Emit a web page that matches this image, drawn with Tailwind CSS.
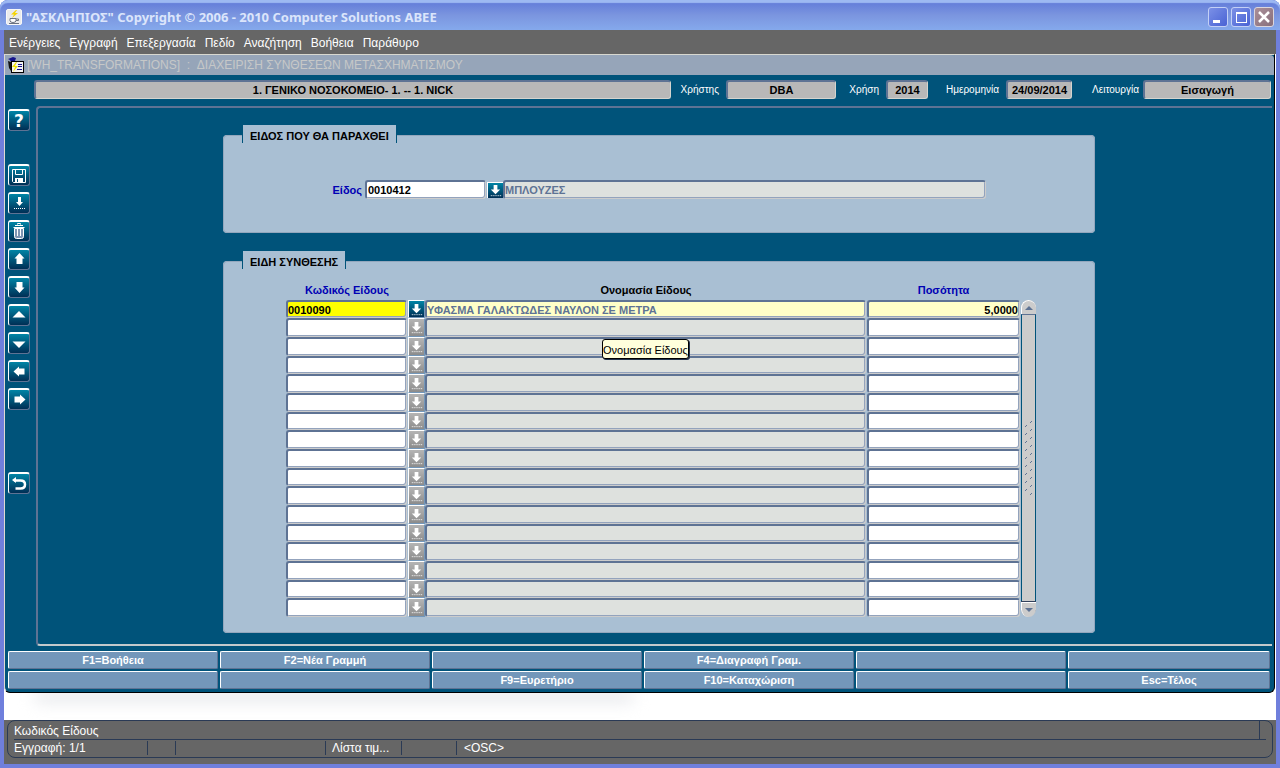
<!DOCTYPE html>
<html lang="el">
  <head>
    <meta charset="UTF-8" />
    <meta name="viewport" content="width=device-width, initial-scale=1.0" />
    <title>"ΑΣΚΛΗΠΙΟΣ"</title>
    <script src="https://cdn.jsdelivr.net/npm/@tailwindcss/browser@4"></script>
  </head>
  <body class="bg-white font-['Liberation_Sans',Arial,sans-serif] text-[11px] leading-4">
    <!-- Shared icon shapes -->
    <svg class="hidden">
      <symbol id="i-lov" viewBox="0 0 16 16">
        <path fill="currentColor" d="M6 2h4v5h3l-5 5-5-5h3z" />
        <path stroke="currentColor" stroke-dasharray="1 1" d="M3 13.5h11" />
      </symbol>
    </svg>

    <div class="min-h-screen flex flex-col rounded-t-lg border-x-4 border-b-4 border-[#6f7fdc] bg-white">
      <!-- Title bar -->
      <header class="-mx-1 h-[30px] flex items-center gap-1 rounded-t-lg pl-1.5 pr-1.5 bg-linear-to-b from-[#5f78d8] via-[#7b95df] to-[#85a9ec] shadow-[inset_0_3px_1px_#9db9f2] pt-[3px]">
        <svg class="size-4" viewBox="0 0 16 16">
          <rect x=".5" y=".5" width="15" height="15" rx="1.5" fill="#e9eaec" stroke="#f8f8f8" />
          <path d="M4 9.500h6v2q0 2-3 2t-3-2zM10 10h2.500v1.500H10" fill="#fff" stroke="#6b7280" />
          <path d="M10 1 5 5.500h3L6 9l6-5H9l2-3z" fill="#f5d400" />
          <path d="M3 14.500h10" stroke="#6b7280" />
        </svg>
        <h1 class="flex-1 font-['Noto_Sans',sans-serif] text-[13px] font-bold text-[#dbe5fb]">
          "ΑΣΚΛΗΠΙΟΣ" Copyright © 2006 - 2010 Computer Solutions ABEE
        </h1>
        <div class="flex gap-[3px]">
          <button aria-label="Minimize" class="size-[20px] rounded-[3px] border border-[#c3d0f6] bg-linear-to-br from-[#7b90e6] to-[#4a62d4]">
            <svg viewBox="0 0 18 18"><path d="M4 12h7v3H4z" fill="#fff" /></svg>
          </button>
          <button aria-label="Maximize" class="size-[20px] rounded-[3px] border border-[#c3d0f6] bg-linear-to-br from-[#7b90e6] to-[#4a62d4]">
            <svg viewBox="0 0 18 18"><path d="M4 4h11v11H4zM5 6v8h9V6z" fill="#fff" fill-rule="evenodd" /></svg>
          </button>
          <button aria-label="Close" class="size-[20px] rounded-[3px] border border-[#dcd6dc] bg-linear-to-br from-[#ab8f99] to-[#876f7c]">
            <svg viewBox="0 0 18 18"><path d="m4 4 10 10M14 4 4 14" stroke="#fff" stroke-width="2.500" /></svg>
          </button>
        </div>
      </header>

      <!-- Menu -->
      <nav class="h-6 flex items-center gap-[9px] bg-[#666] px-[5px] pt-0.5 text-[12px] text-white">
        <a href="#">Ενέργειες</a>
        <a href="#">Εγγραφή</a>
        <a href="#">Επεξεργασία</a>
        <a href="#">Πεδίο</a>
        <a href="#">Αναζήτηση</a>
        <a href="#">Βοήθεια</a>
        <a href="#">Παράθυρο</a>
      </nav>

      <!-- Form window -->
      <main class="mr-px rounded-b-md border-l border-r border-b border-t border-l-[#dedad2] border-t-[#d8d8d0] border-r-black border-b-black bg-[#00537a]">
        <div class="h-5 flex items-center gap-[3px] rounded-tr-sm bg-[#96a5b9] pl-[3px] text-[12px] text-[#c6c8c8]">
          <svg class="size-4" viewBox="0 0 16 16">
            <path d="M0 2 5 0l3 1-1 3-4 1-1-2z" fill="#15158c" />
            <path d="M0 4l3 1v9l-2-3z" fill="#111" />
            <rect x="3.500" y="4.500" width="12" height="11" fill="#f4f4f4" stroke="#000" />
            <path d="M8 5 4 10h3l-2 5 5-6H7l2-4z" fill="#f2e400" />
            <path d="M10 7.500h4M10 9.500h4M9 12.500h5" stroke="#15158c" />
          </svg>
          <h2 class="whitespace-pre">[WH_TRANSFORMATIONS]  :  ΔΙΑΧΕΙΡΙΣΗ ΣΥΝΘΕΣΕΩΝ ΜΕΤΑΣΧΗΜΑΤΙΣΜΟΥ</h2>
        </div>

        <!-- Session info -->
        <div class="h-[31px] flex items-start pt-[5px] pl-[29px] pr-[3px] text-[10px] leading-5 text-white">
          <input readonly aria-label="Νοσοκομείο" value="1. ΓΕΝΙΚΟ ΝΟΣΟΚΟΜΕΙΟ- 1. -- 1. NICK" class="min-w-0 flex-1 h-[19px] rounded-[3px] border-t-2 border-l-2 border-r border-b border-t-[#5e7394] border-l-[#5e7394] border-r-[#d4d4cf] border-b-[#d4d4cf] bg-[#b8b8b8] text-center text-[11px] font-bold text-black" />
          <label for="user" class="w-[55px] pr-[7px] text-right">Χρήστης</label>
          <input readonly id="user" value="DBA" class="w-[110px] h-[19px] rounded-[3px] border-t-2 border-l-2 border-r border-b border-t-[#5e7394] border-l-[#5e7394] border-r-[#d4d4cf] border-b-[#d4d4cf] bg-[#b8b8b8] text-center text-[11px] font-bold text-black" />
          <label for="year" class="w-[50px] pr-[7px] text-right">Χρήση</label>
          <input readonly id="year" value="2014" class="w-[42px] h-[19px] rounded-[3px] border-t-2 border-l-2 border-r border-b border-t-[#5e7394] border-l-[#5e7394] border-r-[#d4d4cf] border-b-[#d4d4cf] bg-[#b8b8b8] text-center text-[11px] font-bold text-black" />
          <label for="date" class="w-[78px] pr-[7px] text-right">Ημερομηνία</label>
          <input readonly id="date" value="24/09/2014" class="w-[66px] h-[19px] rounded-[3px] border-t-2 border-l-2 border-r border-b border-t-[#5e7394] border-l-[#5e7394] border-r-[#d4d4cf] border-b-[#d4d4cf] bg-[#b8b8b8] text-center text-[11px] font-bold text-black" />
          <label for="mode" class="w-[71px] pr-[4px] text-right">Λειτουργία</label>
          <input readonly id="mode" value="Εισαγωγή" class="w-[128px] h-[19px] rounded-[3px] border-t-2 border-l-2 border-r border-b border-t-[#5e7394] border-l-[#5e7394] border-r-[#d4d4cf] border-b-[#d4d4cf] bg-[#b8b8b8] text-center text-[11px] font-bold text-black" />
        </div>

        <div class="flex">
          <!-- Toolbar -->
          <div class="w-[31px] flex flex-col gap-[6px] pl-[3px] pt-[3px] text-white *:size-[22px] *:rounded-[3px] *:border *:border-t-2 *:border-t-white *:border-l-white *:border-r-[#5e7394] *:border-b-[#5e7394] *:bg-linear-to-b *:from-[#0085a6] *:to-[#002f55]">
            <button aria-label="Βοήθεια" class="mb-[27px] font-['DejaVu_Sans',sans-serif] text-[17px] leading-[18px] font-bold">?</button>
            <button aria-label="Αποθήκευση">
              <svg viewBox="0 0 20 19" fill="none" stroke="currentColor"><path d="M3.500 3.500h13v13h-12l-1-1zM6.500 3.500v5h7v-5" /><path d="M6 12h8v5H6z" fill="currentColor" stroke="none" /><path d="M8.500 13v3" stroke="#00537a" /></svg>
            </button>
            <button aria-label="Λίστα">
              <svg viewBox="0 0 20 19" fill="currentColor"><path d="M9 3h3v5h2l-3.500 4L7 8h2z" /><path d="M5 14.500h11" stroke="currentColor" stroke-dasharray="1 1" /></svg>
            </button>
            <button aria-label="Διαγραφή">
              <svg viewBox="0 0 20 19" fill="none" stroke="currentColor"><path d="M8.500 2.500v-1h3v1M6 3.500h8M4.500 5.500h11" /><path d="M5.500 6.500v8q0 2 2 2h5q2 0 2-2v-8z" fill="#7f95b3" /><path d="M8.500 7v7M11.500 7v7" /></svg>
            </button>
            <button aria-label="Προηγούμενη εγγραφή">
              <svg viewBox="0 0 20 19" fill="currentColor"><path d="m10.500 3 5 5.500H13.500V14H7.500V8.500H5.500z" /></svg>
            </button>
            <button aria-label="Επόμενη εγγραφή">
              <svg viewBox="0 0 20 19" fill="currentColor"><path d="M7.500 4h6v5.500h2l-5 5.500-5-5.500h2z" /></svg>
            </button>
            <button aria-label="Προηγούμενη σελίδα">
              <svg viewBox="0 0 20 19" fill="currentColor"><path d="m10 5 6.500 6.500h-13z" /></svg>
            </button>
            <button aria-label="Επόμενη σελίδα">
              <svg viewBox="0 0 20 19" fill="currentColor"><path d="M3.500 7.500h13L10 14z" /></svg>
            </button>
            <button aria-label="Αριστερά">
              <svg viewBox="0 0 20 19" fill="currentColor"><path d="M4.500 9.500 10 4.500V6.500h5.500v6H10v2z" /></svg>
            </button>
            <button aria-label="Δεξιά" class="mb-[56px]">
              <svg viewBox="0 0 20 19" fill="currentColor"><path d="M16.500 9.500 11 4.500V6.500H5.500v6H11v2z" /></svg>
            </button>
            <button aria-label="Έξοδος">
              <svg viewBox="0 0 20 19" fill="none" stroke="currentColor" stroke-width="2.500"><path d="M5 6.500h6.500q4.500 0 4.500 4t-4.500 4H6.500" /><path d="M3 6 7 3v6z" fill="currentColor" stroke="none" /></svg>
            </button>
          </div>

          <!-- Canvas -->
          <div class="flex-1 mr-[2px] flex flex-col items-center gap-[18px] rounded-l-[4px] border-t-2 border-l-2 border-b-2 border-t-[#5e7394] border-l-[#5e7394] border-b-[#c3c9cc] pt-[17px] pb-[11px] pl-2 font-bold">
            <fieldset class="w-[872px] rounded-[4px] border border-[#93a7bd] bg-[#a9bfd3] px-[18px] pb-[33px]">
              <legend class="h-[21px]">
                <span class="block h-[18px] border-x border-[#00537a] bg-[#a9bfd3] px-[7px] leading-[22px]">ΕΙΔΟΣ ΠΟΥ ΘΑ ΠΑΡΑΧΘΕΙ</span>
              </legend>
              <div class="flex items-center pt-[34px]">
                <label for="item" class="w-[120px] mr-[3px] text-right text-[#0000b4]">Είδος</label>
                <input id="item" value="0010412" class="w-[121px] h-[19px] mr-px rounded-[3px] border-t-2 border-l-2 border-r border-b border-t-[#5e7394] border-l-[#5e7394] border-r-[#ccc] border-b-[#ccc] bg-white shadow-[inset_-1px_-1px_#93a3bd] pl-px" />
                <button aria-label="Λίστα τιμών" class="size-4 border-t border-l border-white bg-linear-to-b from-[#0085a6] to-[#002f55] text-white">
                  <svg class="w-full h-full"><use href="#i-lov" /></svg>
                </button>
                <input readonly aria-label="Περιγραφή" value="ΜΠΛΟΥΖΕΣ" class="w-[483px] h-[19px] rounded-[3px] border-t-2 border-l-2 border-r border-b border-t-[#5e7394] border-l-[#5e7394] border-r-[#ccc] border-b-[#ccc] bg-[#dee1de] shadow-[inset_-1px_-1px_#93a3bd] text-[#5e7394]" />
              </div>
            </fieldset>

            <fieldset class="relative w-[872px] rounded-[4px] border border-[#93a7bd] bg-[#a9bfd3] px-[18px] pb-[15px]">
              <legend class="h-[21px]">
                <span class="block h-[18px] border-x border-[#00537a] bg-[#a9bfd3] px-[7px] leading-[22px]">ΕΙΔΗ ΣΥΝΘΕΣΗΣ</span>
              </legend>
              <div class="flex pl-[44px]">
                <table class="w-[734px] table-fixed border-collapse">
                  <thead>
                    <tr class="h-7 align-bottom leading-5 text-[#0000b4]">
                      <th class="w-[122px] p-0">Κωδικός Είδους</th>
                      <th class="w-[17px] p-0"></th>
                      <th class="w-[442px] p-0 text-black">Ονομασία Είδους</th>
                      <th class="w-[153px] p-0">Ποσότητα</th>
                    </tr>
                  </thead>
                  <tbody id="rows"></tbody>
                </table>
                <!-- Scrollbar -->
                <div class="mt-7 ml-px w-[15px] flex flex-col bg-[#ccc] rounded-full overflow-hidden text-[#5e7394]">
                  <button aria-label="Πάνω" class="h-[14px] rounded-t-full border-t border-l border-white">
                    <svg viewBox="0 0 14 13"><path d="m7 5 4 4H3z" fill="currentColor" /></svg>
                  </button>
                  <div class="flex-1 flex items-center justify-center border-x border-t border-[#00537a] border-t-[#5e7394]">
                    <svg class="w-[8px] h-[76px]" shape-rendering="crispEdges">
                      <defs>
                        <pattern id="grip" width="8" height="8" patternUnits="userSpaceOnUse">
                          <path d="M6 0h1v1H6zM5 1h1v1H5zM1 4h1v1H1zM0 5h1v1H0z" fill="#5e7394" />
                        </pattern>
                      </defs>
                      <rect width="8" height="76" fill="url(#grip)" />
                    </svg>
                  </div>
                  <button aria-label="Κάτω" class="h-[15px] rounded-b-full border-t border-l border-[#fff] shadow-[0_-1px_#33415c]">
                    <svg viewBox="0 0 14 13"><path d="M3 4h8L7 8z" fill="currentColor" /></svg>
                  </button>
                </div>
              </div>
              <div role="tooltip" class="absolute left-[378px] top-[67px] w-[87px] h-[20px] rounded-[3px] border border-black bg-[#ffffdc] text-center font-normal leading-5 shadow-[1px_1px_#22334f]">
                Ονομασία Είδους
              </div>
            </fieldset>
          </div>
        </div>

        <!-- Function keys -->
        <div class="grid grid-cols-[repeat(5,minmax(0,210fr))_minmax(0,202fr)] gap-[2px] pt-[5px] pb-[3px] pl-[3px] pr-[4px] font-bold text-white *:h-[18px] *:rounded-[2px] *:border *:border-t-white *:border-l-white *:border-r-[#5e7394] *:border-b-[#5e7394] *:bg-[#7397ba]">
          <button>F1=Βοήθεια</button>
          <button>F2=Νέα Γραμμή</button>
          <button></button>
          <button>F4=Διαγραφή Γραμ.</button>
          <button></button>
          <button></button>
          <button></button>
          <button></button>
          <button>F9=Ευρετήριο</button>
          <button>F10=Καταχώριση</button>
          <button></button>
          <button>Esc=Τέλος</button>
        </div>
      </main>

      <!-- Soft shadow under the window -->
      <div class="min-h-[27px] flex-1 overflow-hidden">
        <div class="ml-[30px] w-[600px] h-[8px] rounded-full bg-[#dddfe4] blur-[8px]"></div>
      </div>

      <!-- Status bar -->
      <footer class="bg-[#666] px-[3px] pb-[6px] text-[12px] text-white">
        <div class="h-[38px] rounded-[8px] border border-[#2a3a55] px-[6px]">
          <div class="h-[19px] flex border-b border-[#2a3a55]">
            <span class="flex-1 leading-5">Κωδικός Είδους</span>
            <span class="mr-[6px] border-l border-[#2a3a55]"></span>
          </div>
          <div class="flex pt-px leading-[15px] *:h-[14px] *:border-[#2a3a55]">
            <span class="w-[134px] border-r">Εγγραφή: 1/1</span>
            <span class="w-[28px] border-r"></span>
            <span class="w-[150px] border-r"></span>
            <span class="w-[76px] border-r pl-[6px]">Λίστα τιμ...</span>
            <span class="w-[55px] border-r"></span>
            <span class="pl-[7px]">&lt;OSC&gt;</span>
          </div>
        </div>
      </footer>
    </div>

    <script>
      const items = [
        { code: "0010090", name: "ΥΦΑΣΜΑ ΓΑΛΑΚΤΩΔΕΣ ΝΑΥΛΟΝ ΣΕ ΜΕΤΡΑ", qty: "5,0000" },
      ];
      const field =
        "block w-full h-full rounded-[3px] border-t-2 border-l-2 border-r border-b border-t-[#5e7394] border-l-[#5e7394] border-r-[#ccc] border-b-[#ccc] shadow-[inset_-1px_-1px_#93a3bd]";

      let html = "";
      for (let i = 0; i < 17; i++) {
        const item = items[i] || { code: "", name: "", qty: "" };
        const active = i < items.length;
        const codeBg = active ? "bg-[#ffff00]" : "bg-white";
        const nameBg = active ? "bg-[#ffffc8]" : "bg-[#dee1de]";
        const qtyBg = active ? "bg-[#ffffc8]" : "bg-white";
        const lovBg = active
          ? "bg-linear-to-b from-[#0085a6] to-[#002f55]"
          : "bg-linear-to-b from-[#b5b5b5] to-[#8c8c8c]";
        html += `
          <tr class="h-[19px] nth-[3n+1]:h-[18px] *:h-[inherit] *:p-0">
            <td><div class="h-full pr-px"><input aria-label="Κωδικός Είδους ${i + 1}" value="${item.code}" class="${field} ${codeBg}" /></div></td>
            <td><button aria-label="Λίστα τιμών ${i + 1}" class="block w-[17px] h-full border border-t-white border-l-white border-r-[#7397ba] border-b-[#7397ba] text-white ${lovBg}"><svg class="w-full h-[15px]"><use href="#i-lov" /></svg></button></td>
            <td><div class="h-full pr-px"><input readonly aria-label="Ονομασία Είδους ${i + 1}" value="${item.name}" class="${field} ${nameBg} text-[#5e7394]" /></div></td>
            <td><input aria-label="Ποσότητα ${i + 1}" value="${item.qty}" class="${field} ${qtyBg} pr-px text-right" /></td>
          </tr>`;
      }
      document.getElementById("rows").innerHTML = html;
    </script>
  </body>
</html>
